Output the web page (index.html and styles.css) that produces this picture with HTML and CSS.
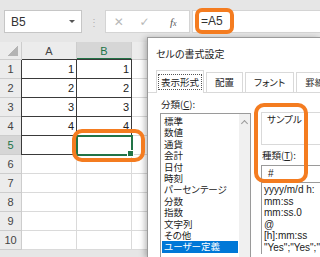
FILE: index.html
```html
<!DOCTYPE html>
<html lang="ja">
<head>
  <meta charset="UTF-8" />
  <title>セルの書式設定</title>
  <link rel="stylesheet" href="styles.css">
</head>
<body>
  <div class="toolbar">
    <div class="namebox"><span>B5</span><span class="caret"></span></div>
    <div class="grip">⋮</div>
    <div class="fxbox">
      <span class="fx-btn">✕</span>
      <span class="fx-btn">✓</span>
      <span class="fx-btn fx-label">f<small>x</small></span>
    </div>
    <div class="formula">=A5</div>
  </div>

  <div class="sheet">
    <div class="hd corner"></div>
    <div class="hd">A</div>
    <div class="hd hd-on">B</div>
    <div class="hd"></div>

    <div class="hd">1</div><div class="c bd top left">1</div><div class="c bd top">1</div><div class="c"></div>
    <div class="hd">2</div><div class="c bd left">2</div><div class="c bd">2</div><div class="c"></div>
    <div class="hd">3</div><div class="c bd left">3</div><div class="c bd">3</div><div class="c"></div>
    <div class="hd">4</div><div class="c bd left">4</div><div class="c bd">4</div><div class="c"></div>
    <div class="hd hd-row-on">5</div><div class="c bd left"></div><div class="c sel"></div><div class="c"></div>
    <div class="hd">6</div><div class="c"></div><div class="c"></div><div class="c"></div>
    <div class="hd">7</div><div class="c"></div><div class="c"></div><div class="c"></div>
    <div class="hd">8</div><div class="c"></div><div class="c"></div><div class="c"></div>
    <div class="hd">9</div><div class="c"></div><div class="c"></div><div class="c"></div>
    <div class="hd">10</div><div class="c"></div><div class="c"></div><div class="c"></div>
  </div>

  <div class="dialog">
    <div class="dlg-title">セルの書式設定</div>
    <div class="tabs">
      <div class="tab active"><span>表示形式</span></div>
      <div class="tab">配置</div>
      <div class="tab">フォント</div>
      <div class="tab">罫線</div>
    </div>
    <div class="panel">
      <div class="col-left">
        <div class="label">分類(<u>C</u>):</div>
        <div class="listbox">
          <ul class="items">
            <li>標準</li>
            <li>数値</li>
            <li>通貨</li>
            <li>会計</li>
            <li>日付</li>
            <li>時刻</li>
            <li>パーセンテージ</li>
            <li>分数</li>
            <li>指数</li>
            <li>文字列</li>
            <li>その他</li>
            <li class="picked">ユーザー定義</li>
          </ul>
          <div class="scroll"><span class="up"></span></div>
        </div>
      </div>
      <div class="col-right">
        <div class="sample">サンプル</div>
        <div class="label kind">種類(<u>T</u>):</div>
        <div class="code-input">#</div>
        <ul class="codes">
          <li>yyyy/m/d h:</li>
          <li>mm:ss</li>
          <li>mm:ss.0</li>
          <li>@</li>
          <li>[h]:mm:ss</li>
          <li>"Yes";"Yes";"</li>
        </ul>
      </div>
    </div>
  </div>

  <div class="mark mark-formula"></div>
  <div class="mark mark-cell"></div>
  <div class="mark mark-sample"></div>
</body>
</html>
```

FILE: styles.css
```css
* {
  box-sizing: border-box;
}

body {
  margin: 0;
  width: 320px;
  height: 257px;
  overflow: hidden;
  position: relative;
  background: #e6e6e6;
  font-family: "Noto Sans CJK JP", sans-serif;
  font-feature-settings: "palt";
  color: #222;
}

/* formula bar */
.toolbar {
  height: 42px;
  display: flex;
  align-items: flex-start;
  padding: 10px 0 0 4px;
}

.namebox {
  width: 78px;
  height: 23px;
  background: #fff;
  border: 1px solid #c6c6c6;
  display: flex;
  align-items: center;
  justify-content: space-between;
  padding: 0 6px;
  font: 12px "Liberation Sans", sans-serif;
  color: #333;
}

.caret {
  border-left: 3px solid transparent;
  border-right: 3px solid transparent;
  border-top: 3px solid #555;
}

.grip {
  width: 23px;
  height: 23px;
  line-height: 23px;
  text-align: center;
  font-size: 10px;
  color: #b0b0b0;
}

.fxbox {
  width: 85px;
  height: 23px;
  background: #fff;
  border: 1px solid #d4d4d4;
  display: flex;
  align-items: center;
}

.fx-btn {
  width: 26px;
  text-align: center;
  color: #b8b8b8;
  font: 12px "DejaVu Sans", sans-serif;
}

.fx-label {
  width: 32px;
  color: #555;
  font: italic 11px "Liberation Serif", serif;
}

.fx-label small {
  font-size: 8px;
}

.formula {
  flex: 1;
  height: 23px;
  margin-left: 2px;
  background: #fff;
  border: 1px solid #d4d4d4;
  border-right: none;
  padding-left: 8px;
  font: 12px "Liberation Sans", sans-serif;
  line-height: 21px;
  color: #333;
}

/* grid */
.sheet {
  display: grid;
  grid-template-columns: 22px 55px 55px 1fr;
  grid-template-rows: 18px;
  grid-auto-rows: 19px;
  background: #fff;
  font: 11px "Liberation Sans", sans-serif;
}

.hd {
  background: #ececec;
  border-right: 1px solid #cdcdcd;
  border-bottom: 1px solid #cdcdcd;
  color: #444;
  text-align: center;
  line-height: 18px;
}

.corner {
  background: #ececec linear-gradient(to bottom right, transparent 50%, #b4b4b4 50%) no-repeat right 3px bottom 3px / 11px 11px;
}

.hd-on {
  background: #d6d6d6;
  color: #217346;
  border-bottom: 2px solid #217346;
}

.hd-row-on {
  background: #d6d6d6;
  color: #217346;
}

.c {
  border-right: 1px solid #dadada;
  border-bottom: 1px solid #dadada;
  text-align: right;
  padding-right: 2px;
  line-height: 19px;
  color: #222;
}

.bd {
  border-right-color: #3a3a3a;
  border-bottom-color: #3a3a3a;
}

.bd.left {
  box-shadow: -1px 0 0 #3a3a3a;
}

.bd.top {
  box-shadow: 0 -1px 0 #3a3a3a;
}

.bd.top.left {
  box-shadow: -1px 0 0 #3a3a3a, 0 -1px 0 #3a3a3a;
}

.sel {
  position: relative;
  outline: 2px solid #217346;
  outline-offset: -1px;
}

.sel::after {
  content: "";
  position: absolute;
  right: -3px;
  bottom: -3px;
  width: 5px;
  height: 5px;
  background: #217346;
  border: 1px solid #fff;
}

/* dialog */
.dialog {
  position: absolute;
  left: 147px;
  top: 37px;
  width: 173px;
  height: 220px;
  overflow: hidden;
  background: #fff;
  border: 1px solid #9a9a9a;
  border-right: none;
  border-bottom: none;
  box-shadow: -2px 1px 6px rgba(0, 0, 0, 0.28);
  font-size: 9.5px;
}

.dlg-title {
  height: 32px;
  padding: 8px 0 0 8px;
  font-size: 10px;
  color: #222;
}

.tabs {
  display: flex;
  align-items: flex-end;
  height: 23px;
  padding-left: 8px;
  border-bottom: 1px solid #d9d9d9;
  white-space: nowrap;
}

.tab {
  flex-shrink: 0;
  height: 20px;
  margin-right: 2px;
  padding: 0 8px;
  line-height: 19px;
  background: #fff;
  border: 1px solid #d9d9d9;
  border-bottom: none;
  color: #222;
}

.tab.active {
  height: 23px;
  margin-bottom: -1px;
  padding: 3px 1px 0;
  line-height: 14px;
}

.tab.active span {
  display: block;
  padding: 0 2px;
  border: 1px dotted #555;
}

.panel {
  display: flex;
  gap: 10px;
  padding: 4px 0 0 12px;
}

.col-left {
  flex-shrink: 0;
}

.label {
  height: 15px;
  line-height: 15px;
  padding-left: 1px;
  white-space: nowrap;
}

.label u {
  text-underline-offset: 1px;
}

.listbox {
  display: flex;
  width: 91px;
  height: 160px;
  margin-top: 1px;
  border: 1px solid #9a9a9a;
}

.items {
  flex: 1;
  list-style: none;
  margin: 0;
  padding: 2px 1px 0;
}

.items li {
  height: 11.4px;
  line-height: 11.4px;
  padding-left: 2px;
  font-size: 9.5px;
  white-space: nowrap;
}

.items li.picked {
  background: #0078d7;
  color: #fff;
}

.scroll {
  width: 11px;
  background: #f0f0f0;
  display: flex;
  justify-content: center;
}

.up {
  width: 5px;
  height: 5px;
  margin-top: 7px;
  border-left: 1px solid #9a9a9a;
  border-top: 1px solid #9a9a9a;
  transform: rotate(45deg);
}

.col-right {
  flex: 1;
  min-width: 0;
  display: flex;
  flex-direction: column;
}

.sample {
  height: 33px;
  margin-top: 15px;
  padding: 0 0 0 5px;
  line-height: 12px;
  border: 1px solid #d9d9d9;
  border-right: none;
  white-space: nowrap;
}

.kind {
  margin-top: 3px;
  height: 17px;
  line-height: 15px;
}

.code-input {
  height: 18px;
  padding-left: 6px;
  border: 1px solid #9a9a9a;
  border-right: none;
  font: 10px "Liberation Sans", sans-serif;
  line-height: 16px;
}

.codes {
  list-style: none;
  margin: 0;
  padding: 1px 0 0 2px;
  border-left: 1px solid #9a9a9a;
  font: 10px "Liberation Sans", sans-serif;
  white-space: nowrap;
  overflow: hidden;
}

.codes li {
  height: 11.6px;
  line-height: 11.6px;
}

/* orange annotations */
.mark {
  position: absolute;
  border: 4px solid #f47c20;
  border-radius: 9px;
}

.mark-formula {
  left: 195px;
  top: 8px;
  width: 39px;
  height: 26px;
  border-radius: 7px;
}

.mark-cell {
  left: 72px;
  top: 129px;
  width: 73px;
  height: 33px;
  border-radius: 10px;
}

.mark-sample {
  left: 254px;
  top: 103px;
  width: 54px;
  height: 80px;
  border-radius: 10px;
}
```
